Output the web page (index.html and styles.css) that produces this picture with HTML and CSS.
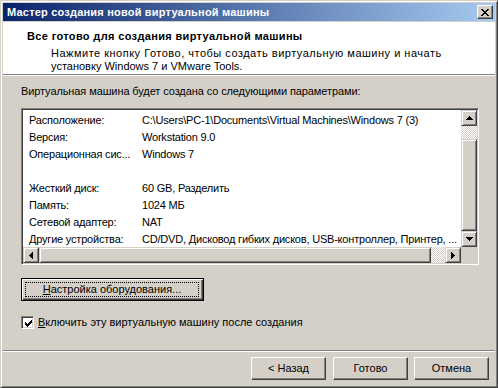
FILE: index.html
```html
<!doctype html>
<html>

<head>
    <meta charset="utf-8">
    <title>Мастер создания новой виртуальной машины</title>
    <link rel="stylesheet" href="styles.css">
</head>

<body>
<div class="window">
    <div class="titlebar">
        <span class="title">Мастер создания новой виртуальной машины</span>
        <span class="close">
            <svg width="8" height="7" viewBox="0 0 8 7" shape-rendering="crispEdges"><path d="M0 0h2v1H0zM6 0h2v1H6zM1 1h2v1H1zM5 1h2v1H5zM2 2h4v1H2zM3 3h2v1H3zM2 4h4v1H2zM1 5h2v1H1zM5 5h2v1H5zM0 6h2v1H0zM6 6h2v1H6z"/></svg>
        </span>
    </div>
    <div class="header">
        <div class="header-title">Все готово для создания виртуальной машины</div>
        <div class="header-text"><span class="wide">Нажмите кнопку Готово, чтобы создать виртуальную машину и начать</span><br>установку Windows 7 и VMware Tools.</div>
    </div>
    <div class="content">
        <p class="intro">Виртуальная машина будет создана со следующими параметрами:</p>
        <div class="listbox">
            <div class="viewport">
                <div class="rows">
                    <span>Расположение:</span><span>C:\Users\PC-1\Documents\Virtual Machines\Windows 7 (3)</span>
                    <span>Версия:</span><span>Workstation 9.0</span>
                    <span>Операционная сис...</span><span>Windows 7</span>
                    <span></span><span></span>
                    <span>Жесткий диск:</span><span>60 GB, Разделить</span>
                    <span>Память:</span><span>1024 МБ</span>
                    <span>Сетевой адаптер:</span><span>NAT</span>
                    <span>Другие устройства:</span><span>CD/DVD, Дисковод гибких дисков, USB-контроллер, Принтер, ...</span>
                </div>
            </div>
            <div class="vscroll">
                <span class="sbtn"><svg width="7" height="4" viewBox="0 0 7 4" shape-rendering="crispEdges"><path d="M3 0h1v1H3zM2 1h3v1H2zM1 2h5v1H1zM0 3h7v1H0z"/></svg></span>
                <span class="track vtrack"></span>
                <span class="thumb vthumb"></span>
                <span class="sbtn"><svg width="7" height="4" viewBox="0 0 7 4" shape-rendering="crispEdges"><path d="M0 0h7v1H0zM1 1h5v1H1zM2 2h3v1H2zM3 3h1v1H3z"/></svg></span>
            </div>
            <div class="hscroll">
                <span class="sbtn"><svg width="4" height="7" viewBox="0 0 4 7" shape-rendering="crispEdges"><path d="M0 3h1v1H0zM1 2h1v3H1zM2 1h1v5H2zM3 0h1v7H3z"/></svg></span>
                <span class="thumb hthumb"></span>
                <span class="track htrack"></span>
                <span class="sbtn"><svg width="4" height="7" viewBox="0 0 4 7" shape-rendering="crispEdges"><path d="M0 0h1v7H0zM1 1h1v5H1zM2 2h1v3H2zM3 3h1v1H3z"/></svg></span>
            </div>
            <div class="corner"></div>
        </div>
        <button class="btn btn-default setup"><span class="focus"><u>Н</u>астройка оборудования...</span></button>
        <label class="check">
            <span class="box"><svg width="7" height="7" viewBox="0 0 7 7" shape-rendering="crispEdges"><path d="M6 0h1v1H6zM5 1h2v1H5zM0 2h1v1H0zM4 2h3v1H4zM0 3h2v1H0zM3 3h3v1H3zM0 4h5v1H0zM1 5h3v1H1zM2 6h1v1H2z"/></svg></span>
            <span><u>В</u>ключить эту виртуальную машину после создания</span>
        </label>
    </div>
    <div class="footer">
        <button class="btn">&lt; Назад</button>
        <button class="btn next">Готово</button>
        <button class="btn cancel">Отмена</button>
    </div>
</div>
</body>

</html>
```

FILE: styles.css
```css
* {
    margin: 0;
    padding: 0;
    box-sizing: border-box;
}

body {
    background: #d4d0c8;
    font: 11px/13px "Liberation Sans", Arial, sans-serif;
    color: #000;
}

u {
    text-decoration: underline;
}

.window {
    width: 498px;
    height: 388px;
    display: flex;
    flex-direction: column;
    background: #d4d0c8;
    border: 1px solid;
    border-color: #d4d0c8 #404040 #404040 #d4d0c8;
    box-shadow: inset 1px 1px #fff, inset -1px -1px #808080;
    padding: 2px;
}

/* заголовок окна */
.titlebar {
    flex: none;
    height: 18px;
    display: flex;
    align-items: center;
    justify-content: space-between;
    padding: 0 2px 0 4px;
    background: linear-gradient(to right, #0a246a, #a6caf0);
    color: #fff;
    font-weight: bold;
    letter-spacing: 0.2px;
}

.close {
    width: 16px;
    height: 14px;
    display: flex;
    align-items: center;
    justify-content: center;
    padding-right: 1px;
    background: #d4d0c8;
    border: 1px solid;
    border-color: #fff #404040 #404040 #fff;
    box-shadow: inset -1px -1px #808080;
}

.header {
    flex: none;
    margin-top: 1px;
    height: 53px;
    background: #fff;
    border-bottom: 1px solid #808080;
    padding: 8px 0 0 24px;
}

.header-title {
    font-weight: bold;
    letter-spacing: 0.35px;
}

.header-text {
    margin-top: 4px;
    padding-left: 24px;
}

.header-text .wide {
    letter-spacing: 0.5px;
}

/* основная часть */
.content {
    flex: 1;
    border-top: 1px solid #fff;
    padding: 9px 0 0 18px;
    display: flex;
    flex-direction: column;
    align-items: flex-start;
}

.intro {
    letter-spacing: -0.1px;
}

.listbox {
    margin-top: 10px;
    width: 458px;
    height: 157px;
    display: grid;
    grid-template-columns: 1fr 16px;
    grid-template-rows: 1fr 16px;
    border: 1px solid;
    border-color: #808080 #fff #fff #808080;
    box-shadow: inset 1px 1px #404040, inset -1px -1px #d4d0c8;
    padding: 1px;
    background: #fff;
}

.viewport {
    overflow: hidden;
    padding: 2px 0 0 6px;
}

.rows {
    display: grid;
    grid-template-columns: 113px max-content;
    grid-auto-rows: 17px;
    align-items: center;
    white-space: nowrap;
    letter-spacing: -0.2px;
}

.vscroll,
.hscroll {
    display: flex;
    background: #d4d0c8;
}

.vscroll {
    flex-direction: column;
}

.sbtn,
.thumb {
    flex: none;
    width: 16px;
    height: 16px;
    display: flex;
    align-items: center;
    justify-content: center;
    background: #d4d0c8;
    border: 1px solid;
    border-color: #d4d0c8 #404040 #404040 #d4d0c8;
    box-shadow: inset 1px 1px #fff, inset -1px -1px #808080;
}

.track {
    background: repeating-conic-gradient(#fff 0 25%, #d4d0c8 0 50%) 0 0 / 2px 2px;
}

.vtrack {
    height: 13px;
}

.vthumb {
    height: auto;
    flex: 1;
}

.hthumb {
    width: 392px;
}

.htrack {
    flex: 1;
}

.corner {
    background: #d4d0c8;
}

/* кнопки */
.btn {
    width: 75px;
    height: 23px;
    font: inherit;
    color: #000;
    background: #d4d0c8;
    border: 1px solid;
    border-color: #fff #404040 #404040 #fff;
    box-shadow: inset -1px -1px #808080;
}

.btn-default {
    border-color: #000;
    box-shadow: inset 1px 1px #fff, inset -1px -1px #404040, inset -2px -2px #808080;
}

.setup {
    margin-top: 13px;
    width: 183px;
    padding: 3px;
    display: flex;
}

.focus {
    flex: 1;
    display: block;
    height: 15px;
    margin: 0 1px 1px 0;
    line-height: 15px;
    outline: 1px dotted #000;
    outline-offset: -1px;
}

.check {
    margin-top: 15px;
    display: flex;
    align-items: center;
    gap: 4px;
}

.box {
    width: 13px;
    height: 13px;
    display: flex;
    padding: 2px 0 0 2px;
    background: #fff;
    border: 1px solid;
    border-color: #808080 #fff #fff #808080;
    box-shadow: inset 1px 1px #404040, inset -1px -1px #d4d0c8;
}

.box svg {
    margin: 1px 0 0 1px;
}

.footer {
    flex: none;
    height: 35px;
    display: flex;
    justify-content: flex-end;
    gap: 7px;
    padding: 6px 6px 0 0;
    border-top: 1px solid #808080;
    box-shadow: inset 0 1px #fff;
}

.cancel {
    margin-left: -1px;
}
```
